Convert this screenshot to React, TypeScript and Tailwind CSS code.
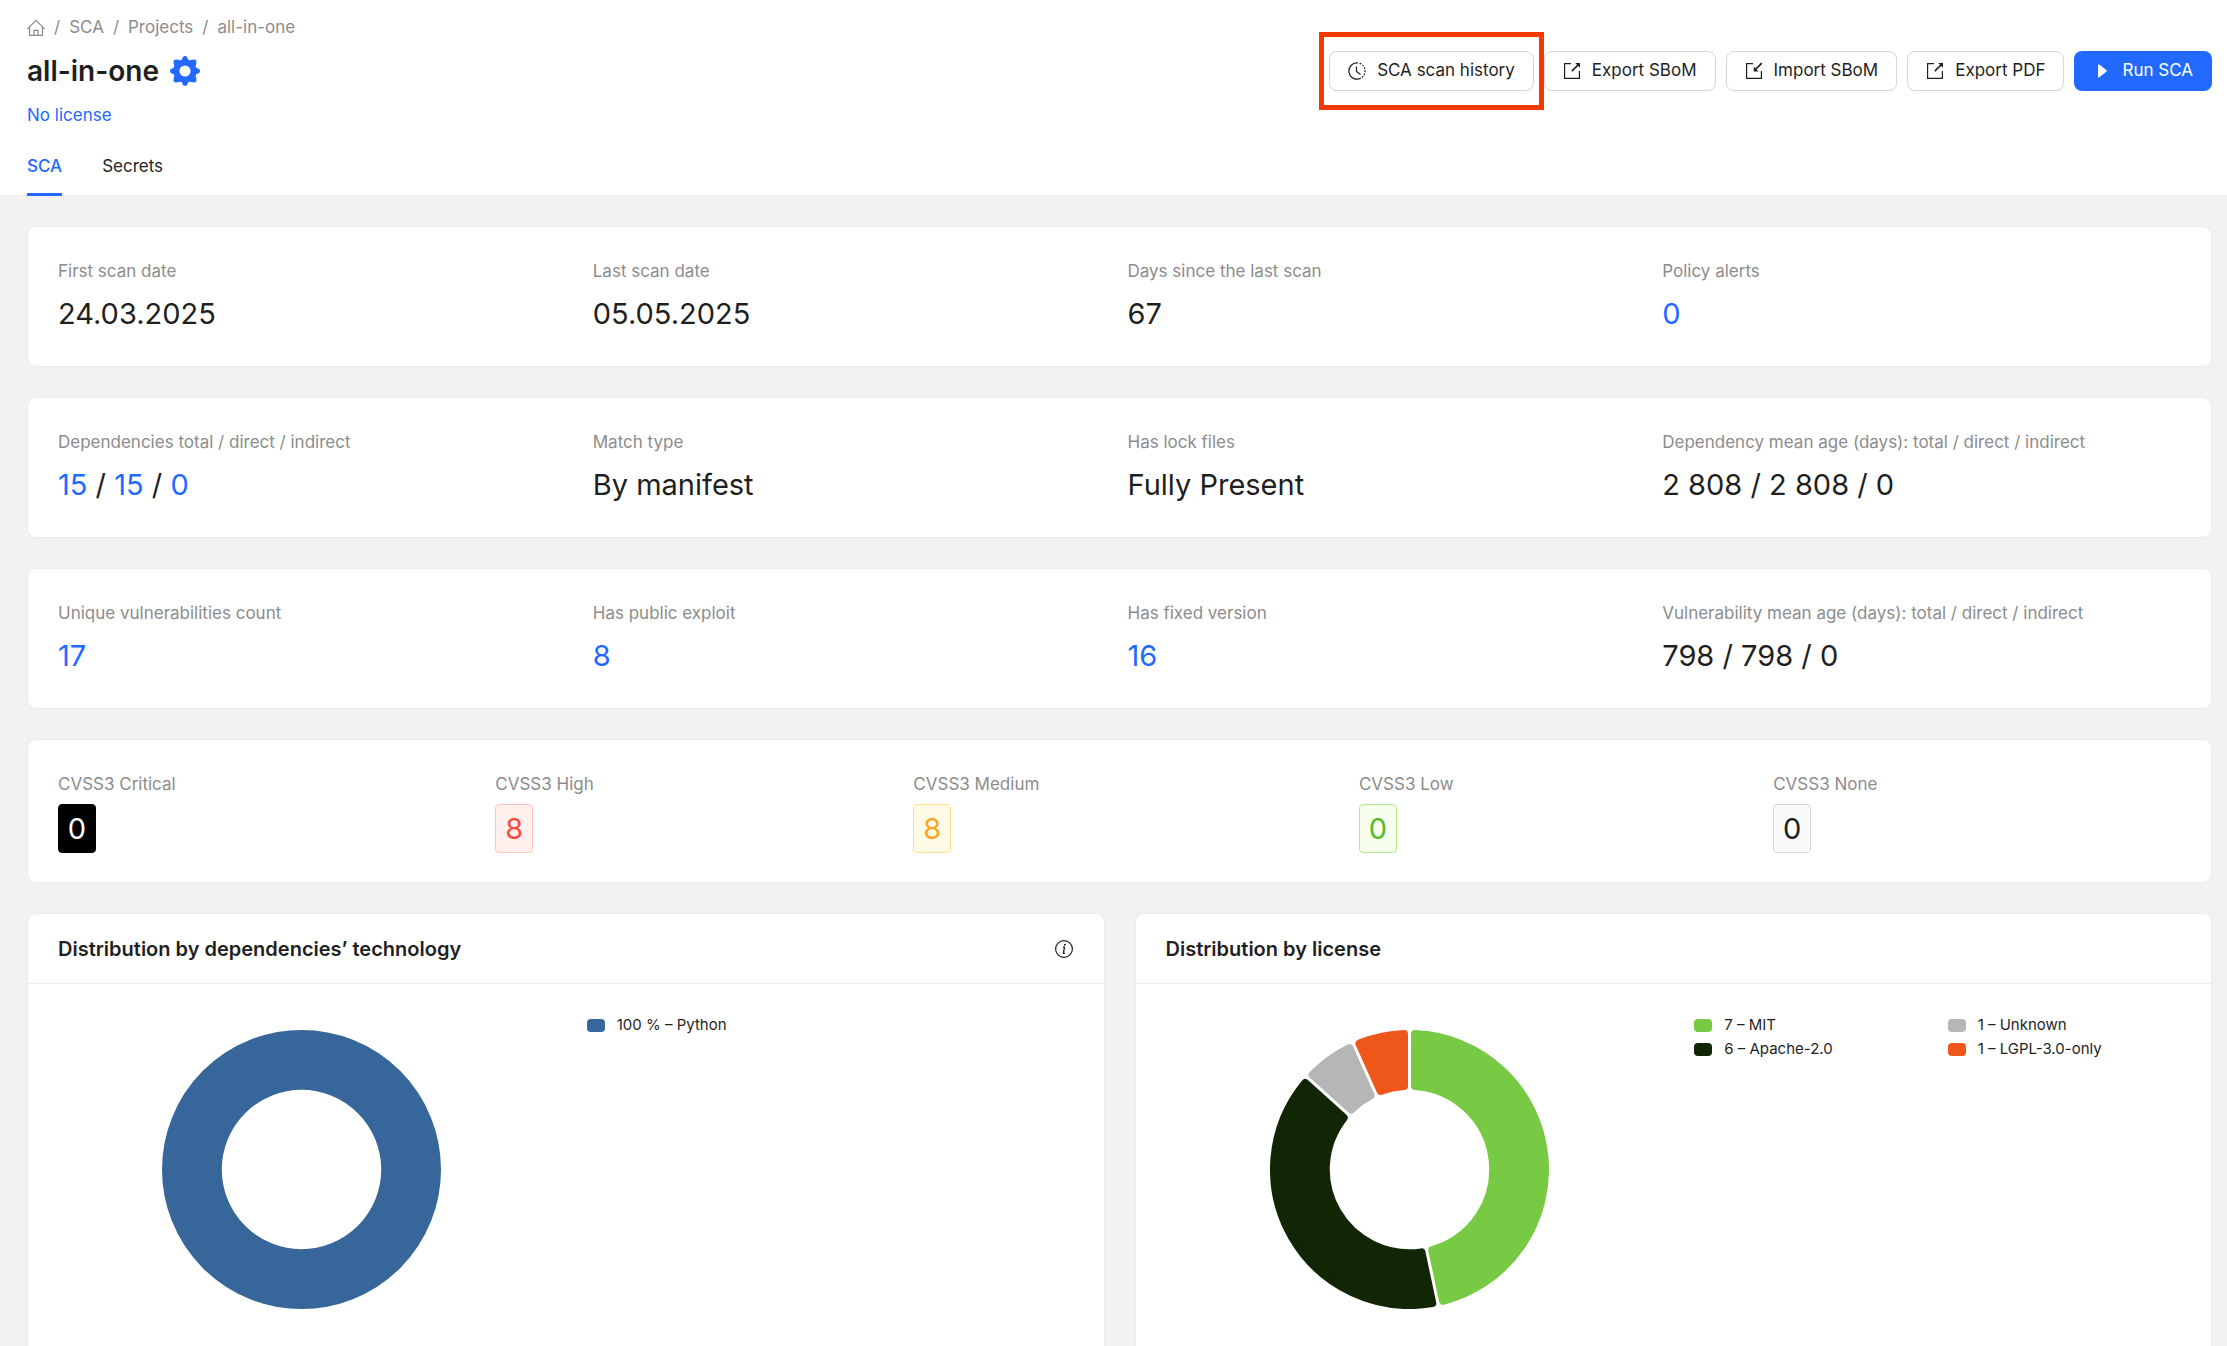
import { Fragment, type ReactNode } from "react";

type IconProps = { className?: string };

const HomeIcon = ({ className }: IconProps) => (
  <svg viewBox="0 0 18 18" className={className} fill="none" stroke="currentColor" strokeWidth="1.2" aria-hidden="true">
    <path d="M0.7 9.6 9 1.3l8.3 8.3" strokeLinecap="round" strokeLinejoin="round" />
    <path d="M2.6 8v8.4h12.8V8" strokeLinejoin="round" />
    <path d="M7 16.2v-4.9h4v4.9" />
  </svg>
);

const GearIcon = ({ className }: IconProps) => (
  <svg viewBox="0 0 30 30" className={className} fill="currentColor" aria-hidden="true">
    <path
      fillRule="evenodd"
      d="M12.8 1.4C13.4.3 14 .1 15 .1s1.600.2 2.200 1.300l1 2.200c.3.600.8.800 1.400.600l4.200-.7c1.600-.2 2.900 1.100 2.700 2.700l-.7 4.200c-.1.600.1 1.100.6 1.400l2.200 1c1.100.600 1.400 1.200 1.400 2.200s-.3 1.600-1.400 2.200l-2.200 1c-.5.300-.7.800-.6 1.400l.7 4.200c.2 1.600-1.100 2.900-2.700 2.700l-4.200-.7c-.6-.1-1.100.1-1.400.6l-1 2.200c-.6 1.100-1.200 1.300-2.200 1.300s-1.600-.2-2.200-1.300l-1-2.200c-.3-.5-.8-.7-1.400-.6l-4.200.7c-1.600.2-2.900-1.100-2.700-2.700l.7-4.200c.1-.6-.1-1.100-.6-1.400l-2.200-1C.3 16.600 0 16 0 15s.3-1.600 1.400-2.200l2.200-1c.5-.3.700-.8.600-1.400l-.7-4.200c-.2-1.600 1.100-2.900 2.700-2.700l4.200.7c.6.200 1.100 0 1.400-.6zM15 9.400a5.600 5.600 0 1 0 0 11.200 5.600 5.600 0 0 0 0-11.200z"
    />
  </svg>
);

const HistoryIcon = ({ className }: IconProps) => (
  <svg viewBox="0 0 18 18" className={className} fill="none" stroke="currentColor" strokeWidth="1.2" aria-hidden="true">
    <path d="M10 0.960A8.100 8.100 0 1 0 13 16.050" />
    <path d="M11.600 1.330A8.100 8.100 0 0 1 13.900 15.450" strokeDasharray="1.800 1.300" />
    <path d="M8.500 4.500v5l4 3" />
  </svg>
);

const ExportIcon = ({ className }: IconProps) => (
  <svg viewBox="0 0 18 18" className={className} fill="none" stroke="currentColor" strokeWidth="1.2" aria-hidden="true">
    <path d="M8 1.600H1.600v14.800h14.800V9" />
    <path d="M8.800 9.200 15 3" strokeWidth="1.700" />
    <path d="M12.200 0.900H17v4.800z" fill="currentColor" stroke="none" />
  </svg>
);

const ImportIcon = ({ className }: IconProps) => (
  <svg viewBox="0 0 18 18" className={className} fill="none" stroke="currentColor" strokeWidth="1.2" aria-hidden="true">
    <path d="M8 1.600H1.600v14.800h14.800V9" />
    <path d="M10.500 7.500 16.800 1.200" strokeWidth="1.700" />
    <path d="M8.700 4.600v4.800h4.800z" fill="currentColor" stroke="none" />
  </svg>
);

const PlayIcon = ({ className }: IconProps) => (
  <svg viewBox="0 0 18 18" className={className} fill="currentColor" aria-hidden="true">
    <path d="M5 3.200c0-.8.700-1 1.300-.6l7.200 5.700c.4.300.4.900 0 1.200l-7.200 5.700c-.6.500-1.300.2-1.300-.5z" />
  </svg>
);

const InfoIcon = ({ className }: IconProps) => (
  <svg viewBox="0 0 20 20" className={className} fill="none" stroke="currentColor" aria-hidden="true">
    <circle cx="10" cy="10" r="8.400" strokeWidth="1.200" />
    <path d="M8.900 8.200h1.600L9.400 14.300h1.500" strokeWidth="1.300" strokeLinejoin="round" />
    <circle cx="10.900" cy="5.700" r="1" fill="currentColor" stroke="none" />
  </svg>
);

const Card = ({ children }: { children: ReactNode }) => (
  <section className="rounded-[9px] border border-[#ececec] bg-white px-[30px] pt-[31px] pb-[29px]">{children}</section>
);

const Label = ({ children }: { children: ReactNode }) => (
  <div className="text-[17px] leading-[27px] text-[#8c8c8c]">{children}</div>
);

const ValueLink = ({ children }: { children: ReactNode }) => (
  <a href="#" className="text-[#226aff]">
    {children}
  </a>
);

type Stat = { label: string; value: string[]; linked?: boolean };

const StatCard = ({ stats }: { stats: Stat[] }) => (
  <Card>
    <div className="grid grid-cols-4 gap-4">
      {stats.map((s) => (
        <div key={s.label}>
          <Label>{s.label}</Label>
          <div className="mt-[5px] text-[29px] leading-[47px]">
            {s.value.map((v, i) => (
              <Fragment key={i}>
                {i > 0 && " / "}
                {s.linked ? <ValueLink>{v}</ValueLink> : v}
              </Fragment>
            ))}
          </div>
        </div>
      ))}
    </div>
  </Card>
);

const statRows: Stat[][] = [
  [
    { label: "First scan date", value: ["24.03.2025"] },
    { label: "Last scan date", value: ["05.05.2025"] },
    { label: "Days since the last scan", value: ["67"] },
    { label: "Policy alerts", value: ["0"], linked: true },
  ],
  [
    { label: "Dependencies total / direct / indirect", value: ["15", "15", "0"], linked: true },
    { label: "Match type", value: ["By manifest"] },
    { label: "Has lock files", value: ["Fully Present"] },
    { label: "Dependency mean age (days): total / direct / indirect", value: ["2\u00a0808", "2\u00a0808", "0"] },
  ],
  [
    { label: "Unique vulnerabilities count", value: ["17"], linked: true },
    { label: "Has public exploit", value: ["8"], linked: true },
    { label: "Has fixed version", value: ["16"], linked: true },
    { label: "Vulnerability mean age (days): total / direct / indirect", value: ["798", "798", "0"] },
  ],
];

const severities = [
  { label: "CVSS3 Critical", value: 0, tone: "border-black bg-black text-white" },
  { label: "CVSS3 High", value: 8, tone: "border-[#ffc4bd] bg-[#fff0ee] text-[#fb4a3e]" },
  { label: "CVSS3 Medium", value: 8, tone: "border-[#ffe28c] bg-[#fffae6] text-[#f7a623]" },
  { label: "CVSS3 Low", value: 0, tone: "border-[#b4eb8c] bg-[#f6ffec] text-[#55bb2a]" },
  { label: "CVSS3 None", value: 0, tone: "border-[#d6d6d6] bg-[#fafafa] text-[#1f1f1f]" },
];

const OUTER = 140;
const INNER = 80;
const CORNER = 4;
const GAP = 3;

type Slice = { text: string; share: number; color: string };

/* Outline of a ring slice pulled in by the corner radius; a round-joined stroke grows it back. */
function slicePath(start: number, end: number) {
  const ro = OUTER - CORNER;
  const ri = INNER + CORNER;
  const d = GAP / 2 + CORNER;
  const point = (r: number, a: number) =>
    `${(OUTER + r * Math.sin(a)).toFixed(2)} ${(OUTER - r * Math.cos(a)).toFixed(2)}`;
  const ao = Math.asin(d / ro);
  const ai = Math.asin(d / ri);
  const large = end - start > Math.PI ? 1 : 0;
  return `M${point(ro, start + ao)}A${ro} ${ro} 0 ${large} 1 ${point(ro, end - ao)}L${point(ri, end - ai)}A${ri} ${ri} 0 ${large} 0 ${point(ri, start + ai)}Z`;
}

const Donut = ({ slices }: { slices: Slice[] }) => {
  const total = slices.reduce((sum, s) => sum + s.share, 0);
  let angle = 0;
  return (
    <svg viewBox="0 0 280 280" className="size-[279px]" role="img" aria-label="Distribution chart">
      {slices.length === 1 ? (
        <circle cx={OUTER} cy={OUTER} r={(OUTER + INNER) / 2} fill="none" stroke={slices[0].color} strokeWidth={OUTER - INNER} />
      ) : (
        slices.map((s) => {
          const start = angle;
          angle += (s.share / total) * Math.PI * 2;
          return (
            <path
              key={s.text}
              d={slicePath(start, angle)}
              fill={s.color}
              stroke={s.color}
              strokeWidth={CORNER * 2}
              strokeLinejoin="round"
            />
          );
        })
      )}
    </svg>
  );
};

const ChartCard = ({ title, info, slices }: { title: string; info?: boolean; slices: Slice[] }) => (
  <section className="rounded-t-[9px] border border-b-0 border-[#ececec] bg-white">
    <header className="flex h-[70px] items-center justify-between border-b border-[#ececec] px-[30px]">
      <h2 className="text-[20px] leading-[30px] font-semibold">{title}</h2>
      {info && (
        <button type="button" aria-label="About this chart">
          <InfoIcon className="size-5" />
        </button>
      )}
    </header>
    <div className="grid grid-cols-2 px-[10px]">
      <div className="flex justify-center pt-[46px] pb-12">
        <Donut slices={slices} />
      </div>
      <ul className="grid grid-flow-col grid-cols-2 grid-rows-[24px_24px] pt-[29px] pl-[21px] text-[15px] leading-[24px]">
        {slices.map((s) => (
          <li key={s.text} className="flex items-center gap-3">
            <span className="h-[13px] w-[18px] rounded" style={{ backgroundColor: s.color }} />
            {s.text}
          </li>
        ))}
      </ul>
    </div>
  </section>
);

const outlineButton =
  "flex h-10 items-center gap-[11px] rounded-lg border border-[#d6d6d6] bg-white px-[18px] text-[17px] shadow-[0_2px_0_rgba(0,0,0,0.02)]";

export default function App() {
  return (
    <div className="flex min-h-screen flex-col bg-[#f2f2f2] font-['Inter','Liberation_Sans',sans-serif] text-[#1f1f1f]">
      <header className="border-b border-[#ececec] bg-white pr-[15px] pl-[27px]">
        <nav aria-label="Breadcrumb" className="flex items-center gap-[9px] pt-[14px] text-[17px] leading-[27px] text-[#8c8c8c]">
          <a href="#" aria-label="Home">
            <HomeIcon className="size-[18px]" />
          </a>
          <span>/</span>
          <a href="#">SCA</a>
          <span>/</span>
          <a href="#">Projects</a>
          <span>/</span>
          <span>all-in-one</span>
        </nav>
        <div className="mt-[10px] flex h-10 items-center justify-between">
          <div className="flex items-center gap-[11px]">
            <h1 className="text-[28px] leading-[40px] font-semibold">all-in-one</h1>
            <button type="button" aria-label="Project settings" className="text-[#226aff]">
              <GearIcon className="size-[30px]" />
            </button>
          </div>
          <div className="flex items-center gap-[10px]">
            <div className="relative">
              <button type="button" className={outlineButton}>
                <HistoryIcon className="size-[18px]" />
                SCA scan history
              </button>
              <span className="pointer-events-none absolute -inset-x-[10px] -inset-y-[19px] border-[5px] border-[#f53a00]" />
            </div>
            <button type="button" className={outlineButton}>
              <ExportIcon className="size-[18px]" />
              Export SBoM
            </button>
            <button type="button" className={outlineButton}>
              <ImportIcon className="size-[18px]" />
              Import SBoM
            </button>
            <button type="button" className={outlineButton}>
              <ExportIcon className="size-[18px]" />
              Export PDF
            </button>
            <button type="button" className="flex h-10 items-center gap-[11px] rounded-lg bg-[#226aff] px-[19px] text-[17px] text-white">
              <PlayIcon className="size-[18px]" />
              Run SCA
            </button>
          </div>
        </div>
        <a href="#" className="mt-[11px] inline-block text-[17px] leading-[27px] text-[#226aff]">
          No license
        </a>
        <div role="tablist" className="mt-[9px] flex h-[57px] gap-10 text-[17px]">
          <button type="button" role="tab" aria-selected="true" className="-mb-px border-b-3 border-[#226aff] pt-[3px] font-medium text-[#226aff]">
            SCA
          </button>
          <button type="button" role="tab" aria-selected="false" className="-mb-px border-b-3 border-transparent pt-[3px]">
            Secrets
          </button>
        </div>
      </header>

      <main className="flex grow flex-col gap-[30px] pt-[30px] pr-[15px] pl-[27px]">
        {statRows.map((stats) => (
          <StatCard key={stats[0].label} stats={stats} />
        ))}
        <Card>
          <div className="flex gap-4">
            {severities.map((s) => (
              <div key={s.label} className="flex-auto">
                <Label>{s.label}</Label>
                <div className={`mt-[6px] flex h-[49px] w-[38px] items-center justify-center rounded border text-[29px] ${s.tone}`}>
                  {s.value}
                </div>
              </div>
            ))}
          </div>
        </Card>
        <div className="grid grow grid-cols-2 gap-[30px]">
          <ChartCard
            title="Distribution by dependencies’ technology"
            info
            slices={[{ text: "100 % – Python", share: 100, color: "#36669a" }]}
          />
          <ChartCard
            title="Distribution by license"
            slices={[
              { text: "7 – MIT", share: 7, color: "#78c943" },
              { text: "6 – Apache-2.0", share: 6, color: "#112605" },
              { text: "1 – Unknown", share: 1, color: "#b6b6b6" },
              { text: "1 – LGPL-3.0-only", share: 1, color: "#ee561a" },
            ]}
          />
        </div>
      </main>
    </div>
  );
}
